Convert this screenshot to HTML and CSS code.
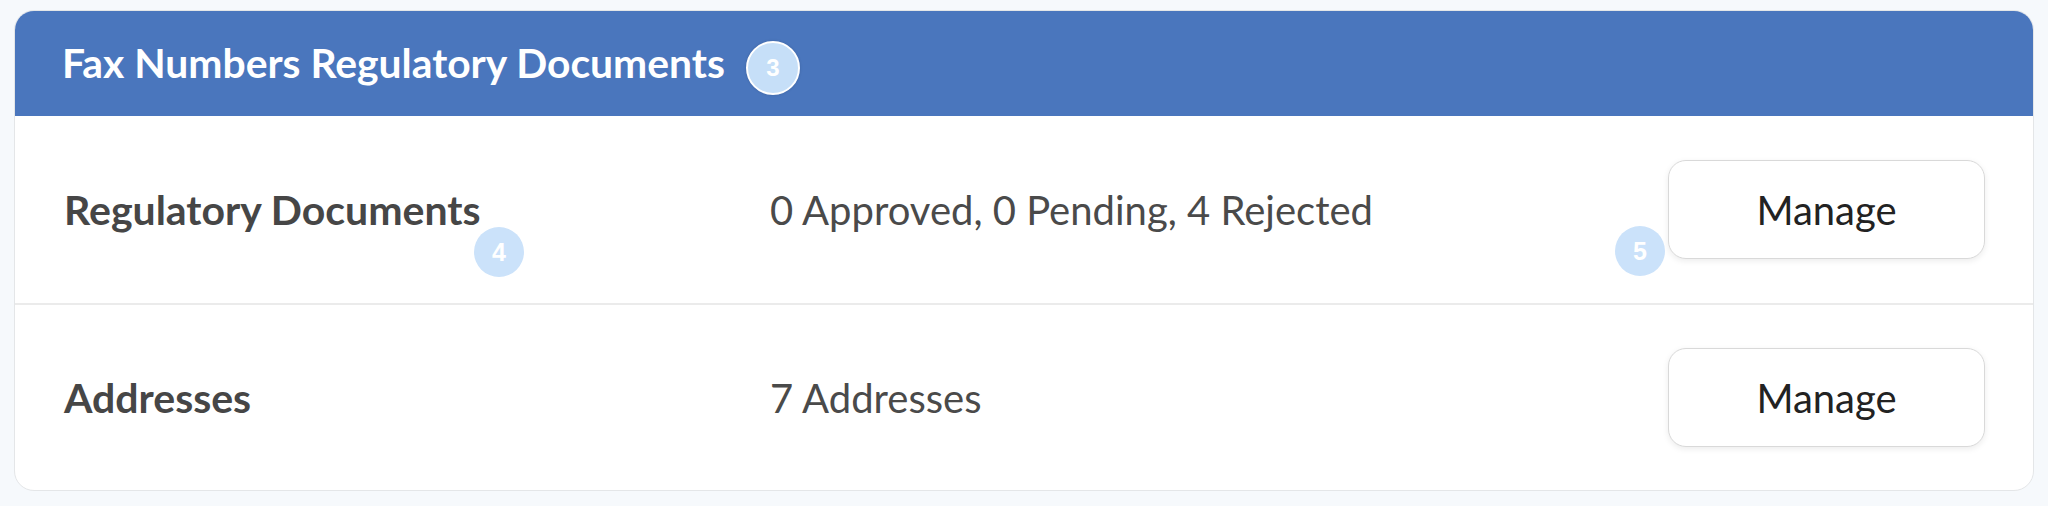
FILE: index.html
```html
<!DOCTYPE html>
<html lang="en">
<head>
<meta charset="utf-8">
<title>Fax Numbers Regulatory Documents</title>
<link rel="stylesheet" href="styles.css">
</head>
<body>
<div class="page">
  <section class="card">
    <header class="card-header">
      <h2 class="card-title">Fax Numbers Regulatory Documents</h2>
    </header>
    <div class="row">
      <div class="row-label">Regulatory Documents</div>
      <div class="row-value">0 Approved, 0 Pending, 4 Rejected</div>
      <button class="btn" type="button">Manage</button>
    </div>
    <div class="row">
      <div class="row-label">Addresses</div>
      <div class="row-value">7 Addresses</div>
      <button class="btn" type="button">Manage</button>
    </div>
    <span class="marker marker-3">3</span>
    <span class="marker marker-4">4</span>
    <span class="marker marker-5">5</span>
  </section>
</div>
</body>
</html>
```
FILE: styles.css
```css
html, body {
  margin: 0;
  padding: 0;
  background: #f6f9fc;
}
body {
  font-family: Lato, "Open Sans", sans-serif;
}
.page {
  padding: 10px 14px 15px 14px;
}
.card {
  position: relative;
  background: #ffffff;
  border: 1px solid #e4e6e8;
  border-radius: 20px;
  overflow: hidden;
}
.card-header {
  background: #4a76bd;
  height: 105px;
  display: flex;
  align-items: center;
  padding: 0 47px;
}
.card-title {
  margin: 0;
  color: #ffffff;
  font-size: 40.8px;
  font-weight: 700;
  line-height: 1;
}
.row {
  display: grid;
  grid-template-columns: 706px 1fr auto;
  align-items: center;
  height: 187px;
  padding: 0 48px 0 49px;
}
.row + .row {
  border-top: 2px solid #ebebeb;
  height: 185px;
}
.row-label {
  font-size: 41px;
  font-weight: 700;
  color: #464646;
}
.row-value {
  font-size: 40px;
  font-weight: 400;
  color: #4a4a4a;
}
.btn {
  width: 317px;
  height: 99px;
  background: #ffffff;
  border: 1px solid #d9d9d9;
  border-radius: 18px;
  box-shadow: 0 2px 6px rgba(0, 0, 0, 0.08);
  font-family: Lato, "Open Sans", sans-serif;
  font-size: 40px;
  color: #222222;
  padding: 0;
}
.marker {
  position: absolute;
  display: flex;
  align-items: center;
  justify-content: center;
  border-radius: 50%;
  background: #c6dff8;
  color: #ffffff;
  font-family: "Liberation Sans", Arial, sans-serif;
  font-weight: 700;
  font-size: 25px;
}
.marker-3 {
  left: 731px;
  top: 30px;
  width: 50px;
  height: 50px;
  border: 2px solid #ffffff;
  box-shadow: 0 0 3px rgba(0, 0, 0, 0.15);
  font-size: 24px;
}
.marker-4 {
  left: 459px;
  top: 216px;
  width: 50px;
  height: 50px;
  background: #cbe2fa;
}
.marker-5 {
  left: 1600px;
  top: 215px;
  width: 50px;
  height: 50px;
  background: #cbe2fa;
}
```
